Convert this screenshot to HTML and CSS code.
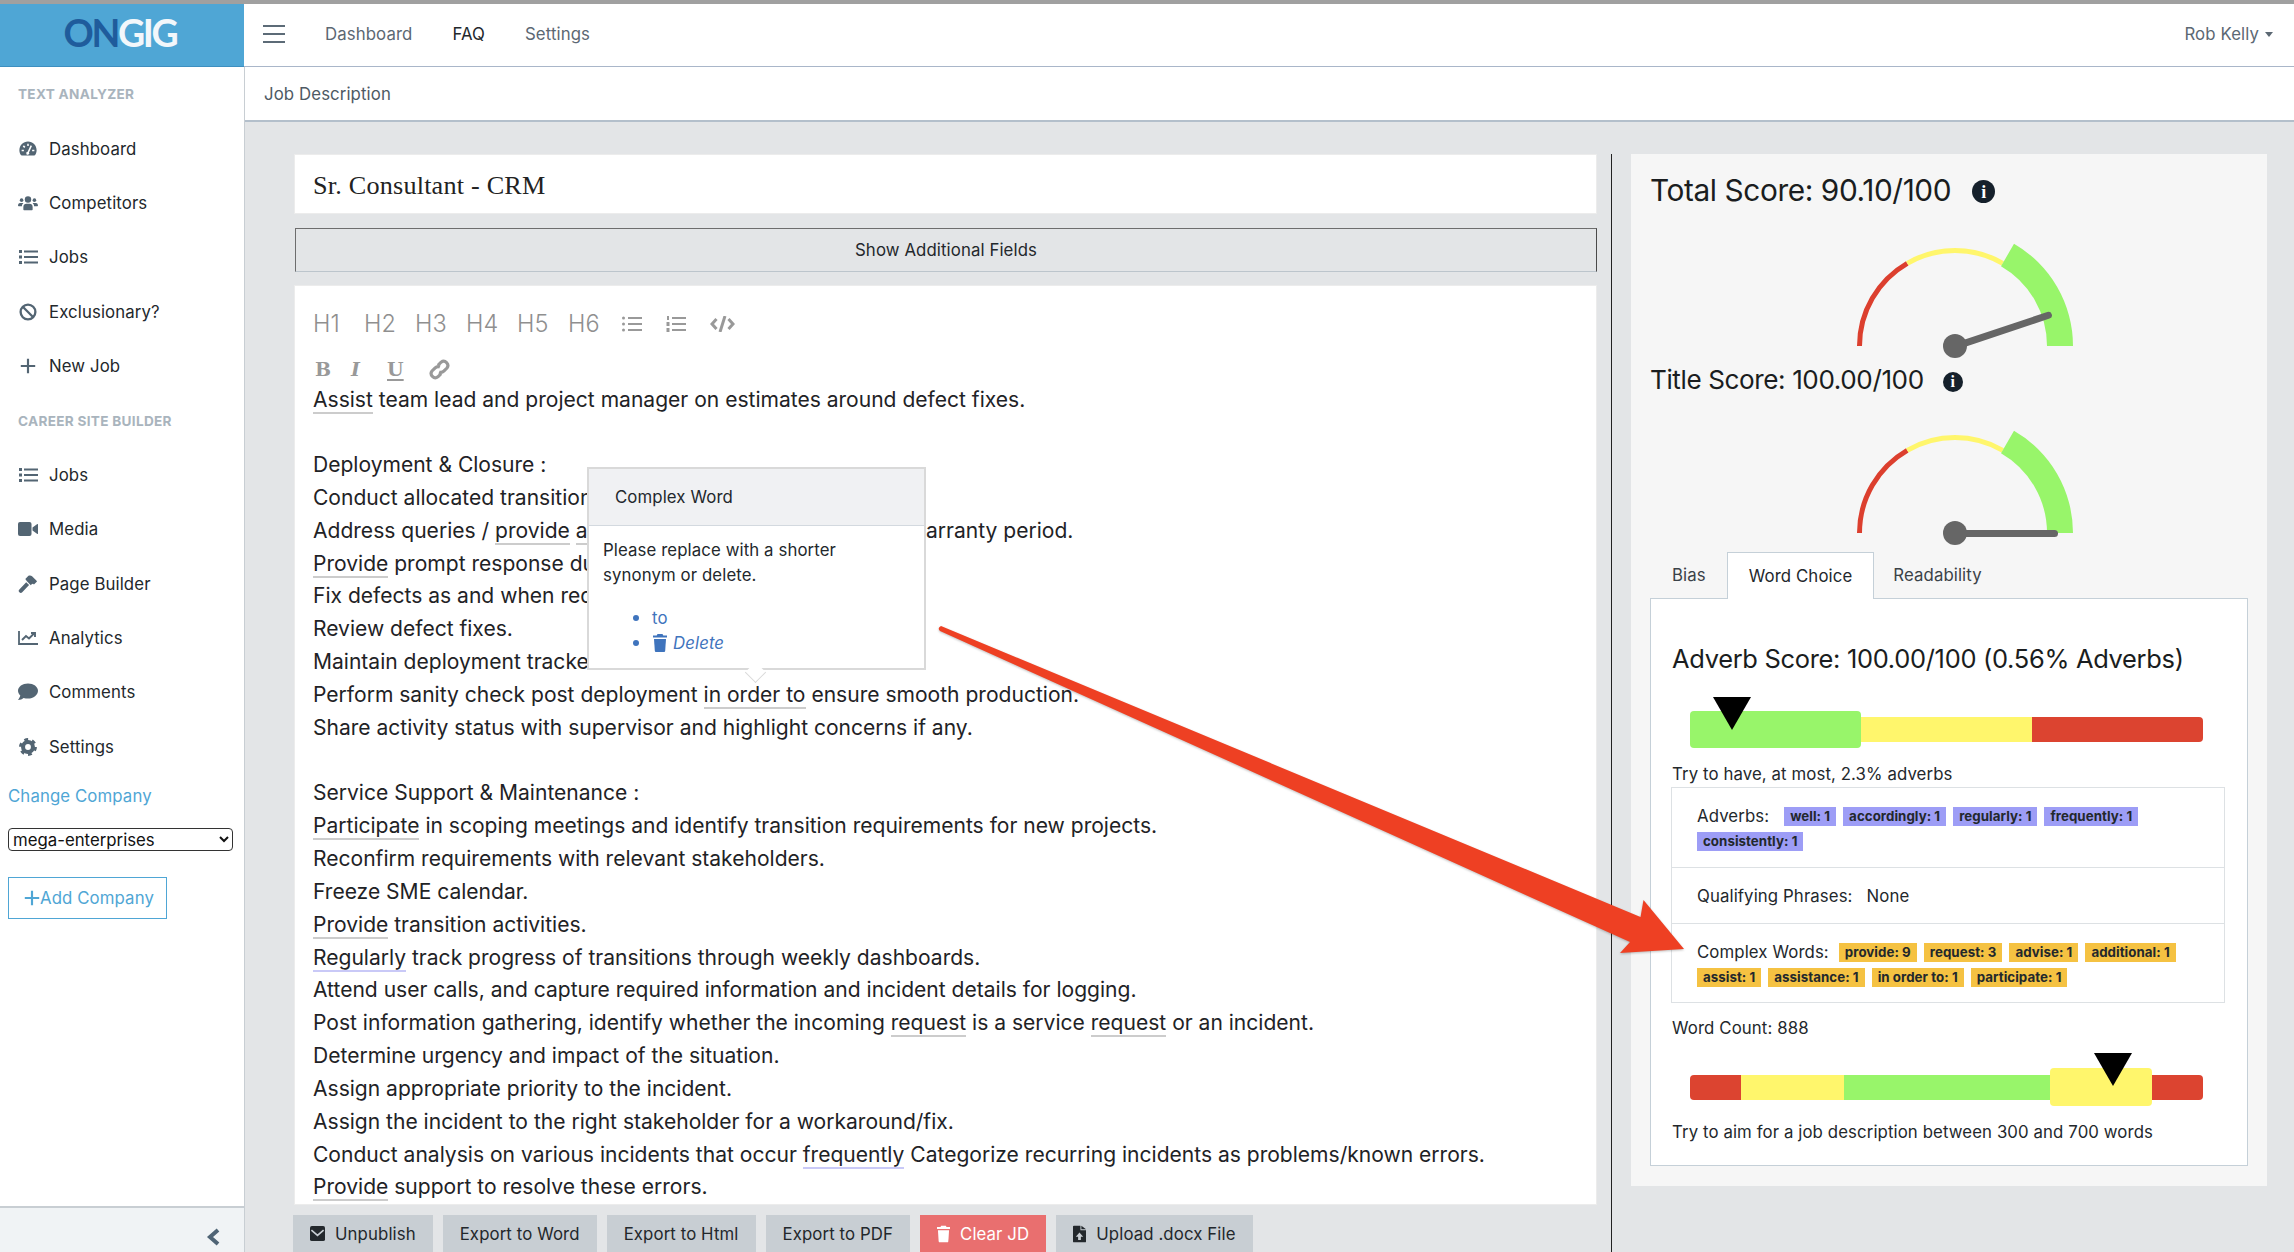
FILE: index.html
```html
<!DOCTYPE html>
<html lang="en">
<head>
<meta charset="utf-8">
<title>Ongig Text Analyzer</title>
<link rel="stylesheet" href="styles.css">
</head>
<body>
<svg class="defs" width="0" height="0" aria-hidden="true">
  <symbol id="i-gauge" viewBox="0 0 24 24"><path fill="currentColor" fill-rule="evenodd" d="M12 2C5.6 2 .5 7.1.5 13.5c0 2.4.7 4.600 2 6.500.3.400.7.500 1.100.500h16.800c.4 0 .8-.1 1.100-.5 1.300-1.900 2-4.100 2-6.500C23.500 7.100 18.400 2 12 2zM11 5h2v3h-2zM5 8.500l1.500-1.500 2 2-1.500 1.500zM3.500 13h3v2h-3zM17.500 13h3v2h-3zM15.500 7l1.800 1-4 8.500a2 2 0 1 1-1.800-.8z"/></symbol>
  <symbol id="i-users" viewBox="0 0 28 20"><g fill="currentColor"><circle cx="14" cy="5" r="4.500"/><circle cx="5" cy="6" r="2.500"/><circle cx="23" cy="6" r="2.500"/><path d="M7.500 19v-3.500c0-3 2-4.500 4-4.500h5c2 0 4 1.500 4 4.500V19a1 1 0 0 1-1 1h-11a1 1 0 0 1-1-1zM0 14c0-2.500 1-4 3-4h3c.6 0 1 .1 1.500.4C6 11.500 5.500 13 5.500 14.500H1a1 1 0 0 1-1-.5zM28 14c0-2.500-1-4-3-4h-3c-.6 0-1 .1-1.500.4 1.500 1.100 2 2.600 2 4.100H27a1 1 0 0 0 1-.5z"/></g></symbol>
  <symbol id="i-list" viewBox="0 0 20 18"><g fill="currentColor"><rect x="1" y="2" width="3" height="3"/><rect x="1" y="7.500" width="3" height="3"/><rect x="1" y="13" width="3" height="3"/><rect x="6" y="2.500" width="14" height="2"/><rect x="6" y="8" width="14" height="2"/><rect x="6" y="13.500" width="14" height="2"/></g></symbol>
  <symbol id="i-ban" viewBox="0 0 20 20"><g fill="none" stroke="currentColor" stroke-width="2.600"><circle cx="10" cy="10" r="8.200"/><path d="M4.200 4.200l11.600 11.600"/></g></symbol>
  <symbol id="i-plus" viewBox="-2 -2 20 20"><path fill="currentColor" d="M6.800 0h2.400v6.800H16v2.400H9.200V16H6.800V9.200H0V6.800h6.800z"/></symbol>
  <symbol id="i-video" viewBox="0 0 20 14"><g fill="currentColor"><rect x="0" y="0" width="13.500" height="14" rx="2"/><path d="M14.500 5.500L19 2.200a.6.600 0 0 1 1 .5v8.600a.6.600 0 0 1-1 .5l-4.500-3.300z"/></g></symbol>
  <symbol id="i-hammer" viewBox="0 0 20 20"><g fill="currentColor"><path d="M8 8l3.200 3.200-7.600 8a2.200 2.200 0 0 1-3.200-3.200z"/><path d="M7 4.500L10.500.8c1.500-.6 3-.4 4 .6l4.800 4.800.7 1-3.400 3.400-1-.8-1.200.2-1.300 1.300L8.600 6.800z"/></g></symbol>
  <symbol id="i-chart" viewBox="0 0 20 14"><g fill="none" stroke="currentColor"><path stroke-width="1.800" d="M1 0v13h19"/><path stroke-width="1.900" d="M4 9l4-4 3 2.500 5-5"/><path stroke-width="1.900" d="M13 2h4v4"/></g></symbol>
  <symbol id="i-comment" viewBox="0 0 20 17"><path fill="currentColor" d="M10 0C4.500 0 0 3.200 0 7.300c0 1.800.9 3.400 2.300 4.700C2 13.700.6 15.700 0 16.500c2 .1 4.300-.9 5.600-2 1.300.4 2.900.6 4.400.6 5.500 0 10-3.600 10-7.800S15.500 0 10 0z"/></symbol>
  <symbol id="i-cog" viewBox="0 0 20 20"><g fill="none" stroke="currentColor"><circle cx="10" cy="10" r="5.500" stroke-width="4.500"/><circle cx="10" cy="10" r="8.300" stroke-width="3.200" stroke-dasharray="4.200 4.500"/></g></symbol>
  <symbol id="i-trash" viewBox="0 0 14 18"><g fill="currentColor"><path d="M4.500 0h5l.8 1.500H14v2H0v-2h3.700z"/><path d="M1 5h12l-.8 11.700c-.1.800-.6 1.300-1.300 1.300H3.100c-.7 0-1.200-.5-1.300-1.300z"/></g></symbol>
  <symbol id="i-mail" viewBox="0 0 16 16"><rect width="16" height="16" rx="2" fill="currentColor"/><path d="M1.500 4.500L8 10l6.500-5.500" fill="none" stroke="#c8ced3" stroke-width="1.800"/></symbol>
  <symbol id="i-file" viewBox="0 0 14 18"><path fill="currentColor" fill-rule="evenodd" d="M0 1a1 1 0 0 1 1-1h7v5h6v12a1 1 0 0 1-1 1H1a1 1 0 0 1-1-1zM9 0l5 4H9zM7 7.500L3 12h2.500v3.500h3V12H11z"/></symbol>
  <symbol id="i-ul" viewBox="0 0 20 16"><g fill="currentColor"><circle cx="1.500" cy="2" r="1.500"/><circle cx="1.500" cy="8" r="1.500"/><circle cx="1.500" cy="14" r="1.500"/><rect x="6" y="1" width="14" height="2"/><rect x="6" y="7" width="14" height="2"/><rect x="6" y="13" width="14" height="2"/></g></symbol>
  <symbol id="i-ol" viewBox="0 0 20 16"><g fill="currentColor"><rect x="1" y="0" width="2" height="4"/><rect x="0.500" y="6" width="3" height="4"/><rect x="0.500" y="12" width="3" height="4"/><rect x="6" y="1" width="14" height="2"/><rect x="6" y="7" width="14" height="2"/><rect x="6" y="13" width="14" height="2"/></g></symbol>
  <symbol id="i-code" viewBox="0 0 24 16"><g fill="none" stroke="currentColor" stroke-width="3"><path d="M6 3L1.500 8 6 13M18 3l4.500 5-4.500 5"/><path d="M14.500 0L9.500 16"/></g></symbol>
  <symbol id="i-link" viewBox="0 0 20 20"><g fill="none" stroke="currentColor" stroke-width="3"><path d="M8.500 6l3-3a4 4 0 0 1 5.600 5.600l-3 3a4 4 0 0 1-4.500.8"/><path d="M11.500 14l-3 3a4 4 0 0 1-5.600-5.600l3-3a4 4 0 0 1 4.500-.8"/></g></symbol>
  <symbol id="i-chev" viewBox="0 0 14 18"><path fill="none" stroke="currentColor" stroke-width="4" d="M12 2L4 9l8 7"/></symbol>
  <symbol id="gauge" viewBox="0 0 240 120">
    <path d="M24.500 106A95.500 95.500 0 0 1 72.250 23.300" fill="none" stroke="#dc3f2e" stroke-width="5"/>
    <path d="M72.250 23.300A95.500 95.500 0 0 1 167.750 23.300" fill="none" stroke="#fff66c" stroke-width="5"/>
    <path d="M179 3.800A118 118 0 0 1 238 106H212A92 92 0 0 0 166 26.300z" fill="#98f56a"/>
  </symbol>
</svg>

<div class="app">
  <header class="topbar">
    <div class="brand"><span class="logo"><span class="logo-on">ON</span>GIG</span></div>
    <nav class="topnav">
      <span class="burger"><i></i><i></i><i></i></span>
      <a class="topnav-link">Dashboard</a>
      <a class="topnav-link topnav-link-active">FAQ</a>
      <a class="topnav-link">Settings</a>
      <a class="user">Rob Kelly<span class="caret"></span></a>
    </nav>
  </header>

  <div class="body-row">
    <aside class="sidebar">
      <div class="side-scroll">
        <div class="side-title">TEXT ANALYZER</div>
        <a class="side-item"><svg class="side-icon"><use href="#i-gauge"/></svg>Dashboard</a>
        <a class="side-item"><svg class="side-icon"><use href="#i-users"/></svg>Competitors</a>
        <a class="side-item"><svg class="side-icon"><use href="#i-list"/></svg>Jobs</a>
        <a class="side-item"><svg class="side-icon"><use href="#i-ban"/></svg>Exclusionary?</a>
        <a class="side-item"><svg class="side-icon"><use href="#i-plus"/></svg>New Job</a>
        <div class="side-title">CAREER SITE BUILDER</div>
        <a class="side-item"><svg class="side-icon"><use href="#i-list"/></svg>Jobs</a>
        <a class="side-item"><svg class="side-icon"><use href="#i-video"/></svg>Media</a>
        <a class="side-item"><svg class="side-icon"><use href="#i-hammer"/></svg>Page Builder</a>
        <a class="side-item"><svg class="side-icon"><use href="#i-chart"/></svg>Analytics</a>
        <a class="side-item"><svg class="side-icon"><use href="#i-comment"/></svg>Comments</a>
        <a class="side-item"><svg class="side-icon"><use href="#i-cog"/></svg>Settings</a>
        <div class="company">
          <a class="company-link">Change Company</a>
          <select class="company-select"><option>mega-enterprises</option></select>
          <a class="company-add"><svg class="company-plus"><use href="#i-plus"/></svg>Add Company</a>
        </div>
      </div>
      <div class="side-footer"><svg class="side-chev"><use href="#i-chev"/></svg></div>
    </aside>

    <div class="content">
      <div class="crumb">Job Description</div>
      <main class="main">
        <section class="left">
          <div class="title-input">Sr. Consultant - CRM</div>
          <button class="more-btn">Show Additional Fields</button>
          <div class="editor">
            <div class="tools tools-head">
              <span class="tool-h">H1</span><span class="tool-h">H2</span><span class="tool-h">H3</span><span class="tool-h">H4</span><span class="tool-h">H5</span><span class="tool-h">H6</span>
              <svg class="tool-ic tool-ul"><use href="#i-ul"/></svg>
              <svg class="tool-ic tool-ol"><use href="#i-ol"/></svg>
              <svg class="tool-ic tool-code"><use href="#i-code"/></svg>
            </div>
            <div class="tools tools-fmt">
              <span class="tool-f tool-b">B</span><span class="tool-f tool-i">I</span><span class="tool-f tool-u">U</span>
              <svg class="tool-link"><use href="#i-link"/></svg>
            </div>
            <div class="doc">
              <p class="ln"><span class="cw">Assist</span> team lead and project manager on estimates around defect fixes.</p>
              <p class="ln">&nbsp;</p>
              <p class="ln">Deployment &amp; Closure :</p>
              <p class="ln">Conduct allocated transition activities on time.</p>
              <p class="ln">Address queries / <span class="cw">provide</span> <span class="cw">assistance</span> to all users during the warranty period.</p>
              <p class="ln"><span class="cw">Provide</span> prompt response during the stabilization.</p>
              <p class="ln">Fix defects as and when required.</p>
              <p class="ln">Review defect fixes.</p>
              <p class="ln">Maintain deployment tracker.</p>
              <p class="ln">Perform sanity check post deployment <span class="cw">in order to</span> ensure smooth production.</p>
              <p class="ln">Share activity status with supervisor and highlight concerns if any.</p>
              <p class="ln">&nbsp;</p>
              <p class="ln">Service Support &amp; Maintenance :</p>
              <p class="ln"><span class="cw">Participate</span> in scoping meetings and identify transition requirements for new projects.</p>
              <p class="ln">Reconfirm requirements with relevant stakeholders.</p>
              <p class="ln">Freeze SME calendar.</p>
              <p class="ln"><span class="cw">Provide</span> transition activities.</p>
              <p class="ln"><span class="adv">Regularly</span> track progress of transitions through weekly dashboards.</p>
              <p class="ln">Attend user calls, and capture required information and incident details for logging.</p>
              <p class="ln">Post information gathering, identify whether the incoming <span class="cw">request</span> is a service <span class="cw">request</span> or an incident.</p>
              <p class="ln">Determine urgency and impact of the situation.</p>
              <p class="ln">Assign appropriate priority to the incident.</p>
              <p class="ln">Assign the incident to the right stakeholder for a workaround/fix.</p>
              <p class="ln">Conduct analysis on various incidents that occur <span class="adv">frequently</span> Categorize recurring incidents as problems/known errors.</p>
              <p class="ln"><span class="cw">Provide</span> support to resolve these errors.</p>
            </div>
          </div>
          <div class="actions">
            <button class="act"><svg class="act-ic act-mail"><use href="#i-mail"/></svg>Unpublish</button>
            <button class="act">Export to Word</button>
            <button class="act">Export to Html</button>
            <button class="act">Export to PDF</button>
            <button class="act act-danger"><svg class="act-ic act-trash"><use href="#i-trash"/></svg>Clear JD</button>
            <button class="act"><svg class="act-ic act-file"><use href="#i-file"/></svg>Upload .docx File</button>
          </div>
        </section>

        <section class="right">
          <div class="panel">
            <h2 class="score score-total">Total Score: 90.10/100<span class="info info-lg">i</span></h2>
            <div class="gauge gauge-first">
              <svg class="gauge-svg"><use href="#gauge"/></svg>
              <span class="needle needle-total"></span><span class="hub"></span>
            </div>
            <h2 class="score score-title">Title Score: 100.00/100<span class="info info-sm">i</span></h2>
            <div class="gauge gauge-second">
              <svg class="gauge-svg"><use href="#gauge"/></svg>
              <span class="needle needle-title"></span><span class="hub"></span>
            </div>
            <div class="tabs">
              <a class="tab">Bias</a>
              <a class="tab tab-active">Word Choice</a>
              <a class="tab">Readability</a>
            </div>
            <div class="card">
              <h3 class="adv-head">Adverb Score: 100.00/100 (0.56% Adverbs)</h3>
              <div class="bar bar-adverb">
                <span class="seg seg-green seg-big seg-a1"></span>
                <span class="seg seg-yellow seg-a2"></span>
                <span class="seg seg-red seg-end seg-a3"></span>
                <span class="pointer pointer-adverb"></span>
              </div>
              <p class="hint hint-adverb">Try to have, at most, 2.3% adverbs</p>
              <div class="list">
                <div class="row row-adverb">
                  <span class="row-label">Adverbs:</span>
                  <span class="tag tag-blue">well: 1</span>
                  <span class="tag tag-blue">accordingly: 1</span>
                  <span class="tag tag-blue">regularly: 1</span>
                  <span class="tag tag-blue">frequently: 1</span>
                  <span class="tag tag-blue">consistently: 1</span>
                </div>
                <div class="row row-qual">
                  <span class="row-label">Qualifying Phrases:</span><span>None</span>
                </div>
                <div class="row row-complex">
                  <span class="row-label">Complex Words:</span>
                  <span class="tag tag-amber">provide: 9</span>
                  <span class="tag tag-amber">request: 3</span>
                  <span class="tag tag-amber">advise: 1</span>
                  <span class="tag tag-amber">additional: 1</span>
                  <span class="tag tag-amber">assist: 1</span>
                  <span class="tag tag-amber">assistance: 1</span>
                  <span class="tag tag-amber">in order to: 1</span>
                  <span class="tag tag-amber">participate: 1</span>
                </div>
              </div>
              <p class="hint hint-count">Word Count: 888</p>
              <div class="bar bar-words">
                <span class="seg seg-red seg-start seg-w1"></span>
                <span class="seg seg-yellow seg-w2"></span>
                <span class="seg seg-green seg-w3"></span>
                <span class="seg seg-yellow seg-big seg-w4"></span>
                <span class="seg seg-red seg-end seg-w5"></span>
                <span class="pointer pointer-words"></span>
              </div>
              <p class="hint hint-aim">Try to aim for a job description between 300 and 700 words</p>
            </div>
          </div>
        </section>
      </main>
    </div>
  </div>

  <div class="popover">
    <div class="pop-head">Complex Word</div>
    <div class="pop-body">
      <p class="pop-text">Please replace with a shorter synonym or delete.</p>
      <ul class="pop-list">
        <li>to</li>
        <li><svg class="pop-trash"><use href="#i-trash"/></svg><em class="pop-del">Delete</em></li>
      </ul>
    </div>
    <span class="pop-tip"></span>
  </div>

  <svg class="arrow" viewBox="0 0 2294 1252">
    <path class="arrow-shape" d="M941 626L1640.500 917L1643.500 900L1684 949L1620 953L1630 942L940 631Q937 628 941 626Z"/>
  </svg>
</div>
</body>
</html>
```

FILE: styles.css
```css
* { box-sizing: border-box; }
html, body { margin: 0; padding: 0; }
body {
  width: 2294px;
  height: 1252px;
  overflow: hidden;
  font-family: Inter, "Noto Sans", "Liberation Sans", sans-serif;
  font-size: 16.800px;
  letter-spacing: 0.1px;
  color: #23282c;
  background: #fff;
}
.defs { position: absolute; }
p, h2, h3, ul { margin: 0; padding: 0; }
button { font: inherit; letter-spacing: inherit; }

.app {
  position: relative;
  display: flex;
  flex-direction: column;
  width: 2294px;
  height: 1252px;
  border-top: 4px solid #a0a0a0;
  overflow: hidden;
}

/* top bar */
.topbar {
  display: flex;
  flex: 0 0 63px;
  border-bottom: 1px solid #a9b6c9;
}
.brand {
  flex: 0 0 244px;
  display: flex;
  align-items: center;
  justify-content: center;
  padding: 0 4px 5px 0;
  background: #4fa6d5;
  margin-bottom: -1px;
  border-bottom: 1px solid #3d8fc0;
}
.logo {
  font-family: Lato, "Open Sans", sans-serif;
  font-weight: 700;
  font-size: 37.500px;
  letter-spacing: -2.400px;
  line-height: 1;
  color: #f2f7fb;
}
.logo-on { color: #1f5c9c; }
.topnav {
  flex: 1;
  display: flex;
  align-items: center;
  padding: 0 0 2px 19px;
}
.burger {
  display: flex;
  flex-direction: column;
  justify-content: space-between;
  width: 22px;
  height: 18px;
  margin-right: 40px;
}
.burger i { display: block; height: 2px; background: #5c6b77; }
.topnav-link { margin-right: 40px; color: #5c6873; }
.topnav-link-active { color: #23282c; }
.user {
  margin-left: auto;
  margin-right: 21px;
  display: flex;
  align-items: center;
  color: #5c6873;
}
.caret {
  margin-left: 6px;
  border-left: 4.500px solid transparent;
  border-right: 4.500px solid transparent;
  border-top: 5px solid #5c6873;
}

/* body */
.body-row { flex: 1; display: flex; min-height: 0; }

.sidebar {
  flex: 0 0 245px;
  display: flex;
  flex-direction: column;
  border-right: 1px solid #c8ced3;
}
.side-scroll { flex: 1; }
.side-title {
  display: flex;
  align-items: center;
  height: 54.400px;
  padding-left: 18px;
  font-size: 13.600px;
  font-weight: 700;
  letter-spacing: 0.3px;
  color: #a9b4bd;
}
.side-item {
  display: flex;
  align-items: center;
  height: 54.400px;
  padding-left: 18px;
  color: #23282c;
}
.side-icon {
  flex: 0 0 20px;
  width: 20px;
  height: 18px;
  margin-right: 11px;
  color: #536573;
}
.company { margin-top: 9px; padding-left: 8px; }
.company-link { display: block; height: 26px; line-height: 26px; color: #4fa6d5; }
.company-select {
  display: block;
  width: 225px;
  height: 23px;
  margin-top: 19px;
  padding: 0;
  font-family: inherit;
  font-size: 16.800px;
  color: #111;
  background: #fff;
  border: 1px solid #333;
  border-radius: 4px;
}
.company-add {
  display: flex;
  align-items: center;
  width: 159px;
  height: 42px;
  margin-top: 26px;
  padding-left: 14px;
  border: 1.500px solid #4fa6d5;
  color: #4fa6d5;
}
.company-plus { width: 18px; height: 18px; flex: none; margin-right: -1px; }
.side-footer {
  flex: 0 0 46px;
  position: relative;
  display: flex;
  justify-content: flex-end;
  align-items: center;
  padding-right: 24px;
  padding-top: 14px;
  background: #f0f3f5;
  border-top: 2px solid #c8ced3;
}
.side-chev { width: 14px; height: 18px; color: #4f6475; }

.content { flex: 1; display: flex; flex-direction: column; min-width: 0; }
.crumb {
  flex: 0 0 55px;
  display: flex;
  align-items: center;
  padding-left: 19px;
  color: #4e5a64;
  border-bottom: 2px solid #b3bfcb;
}
.main {
  flex: 1;
  display: flex;
  min-height: 0;
  padding: 32px 0 0 49px;
  background: #e3e5e7;
}

/* left */
.left { flex: 0 0 1303px; display: flex; flex-direction: column; min-height: 0; }
.title-input {
  flex: 0 0 60px;
  display: flex;
  align-items: center;
  padding: 3px 0 0 18px;
  background: #fff;
  border: 1px solid #ececec;
  font-family: "Liberation Serif", serif;
  font-size: 26.200px;
  letter-spacing: 0.2px;
  color: #222;
}
.more-btn {
  flex: 0 0 44px;
  margin: 14px 0 13px 1px;
  padding: 0;
  background: #e3e5e7;
  color: #23282c;
  border-style: solid;
  border-width: 1px;
  border-color: #6d6d6d #4a4a4a #bcc5cc #6d6d6d;
}
.editor {
  flex: 0 0 920px;
  overflow: hidden;
  padding: 18px 0 0 18px;
  background: #fff;
  border: 1px solid #ececec;
}
.tools { display: flex; align-items: center; color: #999; }
.tools-head { height: 40px; margin-bottom: 10.500px; }
.tools-fmt { height: 29px; }
.tool-h { flex: 0 0 51px; font-size: 23.500px; font-weight: 300; line-height: 1; letter-spacing: 0; color: #8f8f8f; }
.tool-ic { height: 16px; }
.tool-ul { width: 20px; margin: 0 24px 0 3px; }
.tool-ol { width: 20px; margin-right: 24px; }
.tool-code { width: 25px; }
.tool-f {
  flex: 0 0 36px;
  font-family: "DejaVu Serif", serif;
  font-size: 19px;
  font-weight: 700;
  line-height: 1;
  padding-left: 2px;
}
.tool-i { font-style: italic; }
.tool-u { text-decoration: underline; text-underline-offset: 3px; text-decoration-thickness: 2px; }
.tool-link { width: 21px; height: 21px; margin-left: 8px; }
.ln { height: 32.830px; line-height: 32.830px; font-size: 21.050px; white-space: nowrap; letter-spacing: 0; color: #1f2326; }
.cw { border-bottom: 2.500px solid #ccc; }
.adv { border-bottom: 2.500px solid #c9c9f7; }

.actions { display: flex; gap: 10px; margin: 10px 0 0 -1px; flex: 0 0 37px; }
.act {
  display: flex;
  align-items: center;
  height: 37px;
  padding: 0 17px;
  background: #c8ced3;
  border: 0;
  color: #23282c;
  white-space: nowrap;
}
.act-danger { background: #e96f6f; color: #fff; }
.act-ic { margin-right: 10px; flex: none; }
.act-mail { width: 15px; height: 15px; }
.act-trash { width: 13px; height: 18px; }
.act-file { width: 13px; height: 18px; }

/* right */
.right {
  flex: 0 0 auto;
  margin-left: 14px;
  padding-left: 19px;
  border-left: 1.500px solid #222;
}
.panel {
  width: 636px;
  height: 1032px;
  padding: 19px 19px 0;
  background: #f6f6f6;
}
.score { display: flex; align-items: center; font-weight: 400; line-height: 34px; letter-spacing: -0.4px; color: #1a1d20; }
.score-total { font-size: 29.800px; }
.score-title { font-size: 26.100px; margin-top: 3px; }
.info {
  display: inline-flex;
  align-items: center;
  justify-content: center;
  margin-top: 3px;
  border-radius: 50%;
  background: #15202b;
  color: #fff;
  font-family: "Liberation Serif", serif;
  font-weight: 700;
  letter-spacing: 0;
}
.info-lg { width: 23px; height: 23px; margin-left: 21px; font-size: 18px; }
.info-sm { width: 20px; height: 20px; margin-left: 19px; font-size: 16px; }
.gauge { position: relative; width: 240px; height: 120px; margin-left: 185px; }
.gauge-first { margin-top: 33px; }
.gauge-second { margin-top: 30px; }
.gauge-svg { display: block; width: 240px; height: 120px; }
.hub {
  position: absolute;
  left: 108px;
  top: 94px;
  width: 24px;
  height: 24px;
  border-radius: 50%;
  background: #666;
}
.needle {
  position: absolute;
  left: 120px;
  top: 102.500px;
  height: 7px;
  border-radius: 3.500px;
  background: #666;
  transform-origin: 0 3.500px;
}
.needle-total { width: 102px; transform: rotate(-18.500deg); }
.needle-title { width: 103px; }
.tabs { display: flex; height: 46px; margin-top: 5px; padding-left: 1px; }
.tab { display: flex; align-items: center; padding: 0 21px; color: #3b4248; }
.tab-active {
  position: relative;
  margin-bottom: -1px;
  background: #fff;
  color: #23282c;
  border: 1px solid #c5d0d8;
  border-bottom: 0;
}
.tab-active + .tab { padding-left: 19px; }
.card {
  height: 568px;
  margin: 0;
  padding: 43px 21px 0;
  background: #fff;
  border: 1.500px solid #c5d0d8;
}
.adv-head { font-size: 25.450px; font-weight: 400; line-height: 34px; letter-spacing: -0.3px; color: #1a1d20; }
.bar { position: relative; display: flex; align-items: center; width: 513px; height: 37px; margin-left: 18px; }
.bar-adverb { margin-top: 35px; }
.bar-words { height: 38px; margin-top: 28px; }
.seg { height: 25px; flex: none; }
.seg-big { height: 100%; border-radius: 4px; }
.seg-green { background: #98f56a; }
.seg-yellow { background: #fff66c; }
.seg-red { background: #dc4430; }
.seg-start { border-radius: 4px 0 0 4px; }
.seg-end { border-radius: 0 4px 4px 0; }
.seg-a1, .seg-a2, .seg-a3 { width: 171px; }
.seg-w1, .seg-w5 { width: 51px; }
.seg-w2 { width: 103px; }
.seg-w3 { width: 205.500px; }
.seg-w4 { width: 102.500px; }
.pointer {
  position: absolute;
  border-left: 19px solid transparent;
  border-right: 19px solid transparent;
  border-top: 33px solid #000;
}
.pointer-adverb { left: 23px; top: -14px; }
.pointer-words { left: 404px; top: -15px; }
.hint { line-height: 24px; }
.hint-adverb { margin-top: 14px; }
.hint-count { margin-top: 13px; }
.hint-aim { margin-top: 14px; }
.list { margin: 1px 0 0 -1px; width: 554px; border: 1.500px solid #dde1e4; }
.row { display: flex; flex-wrap: wrap; align-items: center; gap: 6px 7px; padding: 0 25px; }
.row-adverb { height: 80px; padding-top: 18px; align-content: flex-start; border-bottom: 1.500px solid #dde1e4; }
.row-qual { height: 56px; border-bottom: 1.500px solid #dde1e4; }
.row-complex { height: 78px; padding-top: 18px; align-content: flex-start; }
.row-label { margin-right: 8px; }
.row-qual .row-label { margin-right: 7px; }
.row-complex .row-label { margin-right: 3px; }
.tag {
  display: inline-block;
  height: 19px;
  line-height: 19px;
  padding: 0 6px;
  font-size: 13.300px;
  font-weight: 700;
  letter-spacing: 0.05px;
  color: #23282c;
}
.tag-blue { background: #9d9df6; }
.tag-amber { background: #f5c242; }

/* popover */
.popover {
  position: absolute;
  left: 587px;
  top: 463px;
  width: 339px;
  height: 203px;
  background: #fff;
  border: 2px solid #d9d9d9;
}
.pop-head {
  height: 57px;
  padding: 16px 0 0 26px;
  line-height: 24px;
  background: #f0f1f3;
  border-bottom: 1.500px solid #d3d9df;
}
.pop-body { padding: 12px 14px 0; }
.pop-text { width: 270px; line-height: 24.500px; }
.pop-list { margin-top: 19px; padding-left: 49px; list-style: disc; color: #3f74bd; line-height: 23.500px; }
.pop-list li::marker { font-size: 20px; }
.pop-trash { width: 16px; height: 18px; margin-right: 5px; vertical-align: -3px; }
.pop-del { font-style: italic; }
.pop-tip {
  position: absolute;
  left: 159px;
  bottom: -12px;
  width: 15px;
  height: 15px;
  background: #fff;
  border-right: 1px solid #d9d9d9;
  border-bottom: 1px solid #d9d9d9;
  transform: rotate(45deg);
}

/* annotation */
.arrow { position: absolute; left: 0; top: -4px; width: 2294px; height: 1252px; pointer-events: none; }
.arrow-shape { fill: #ee4023; filter: drop-shadow(0 1px 1px rgba(0,0,0,.25)); }
```
